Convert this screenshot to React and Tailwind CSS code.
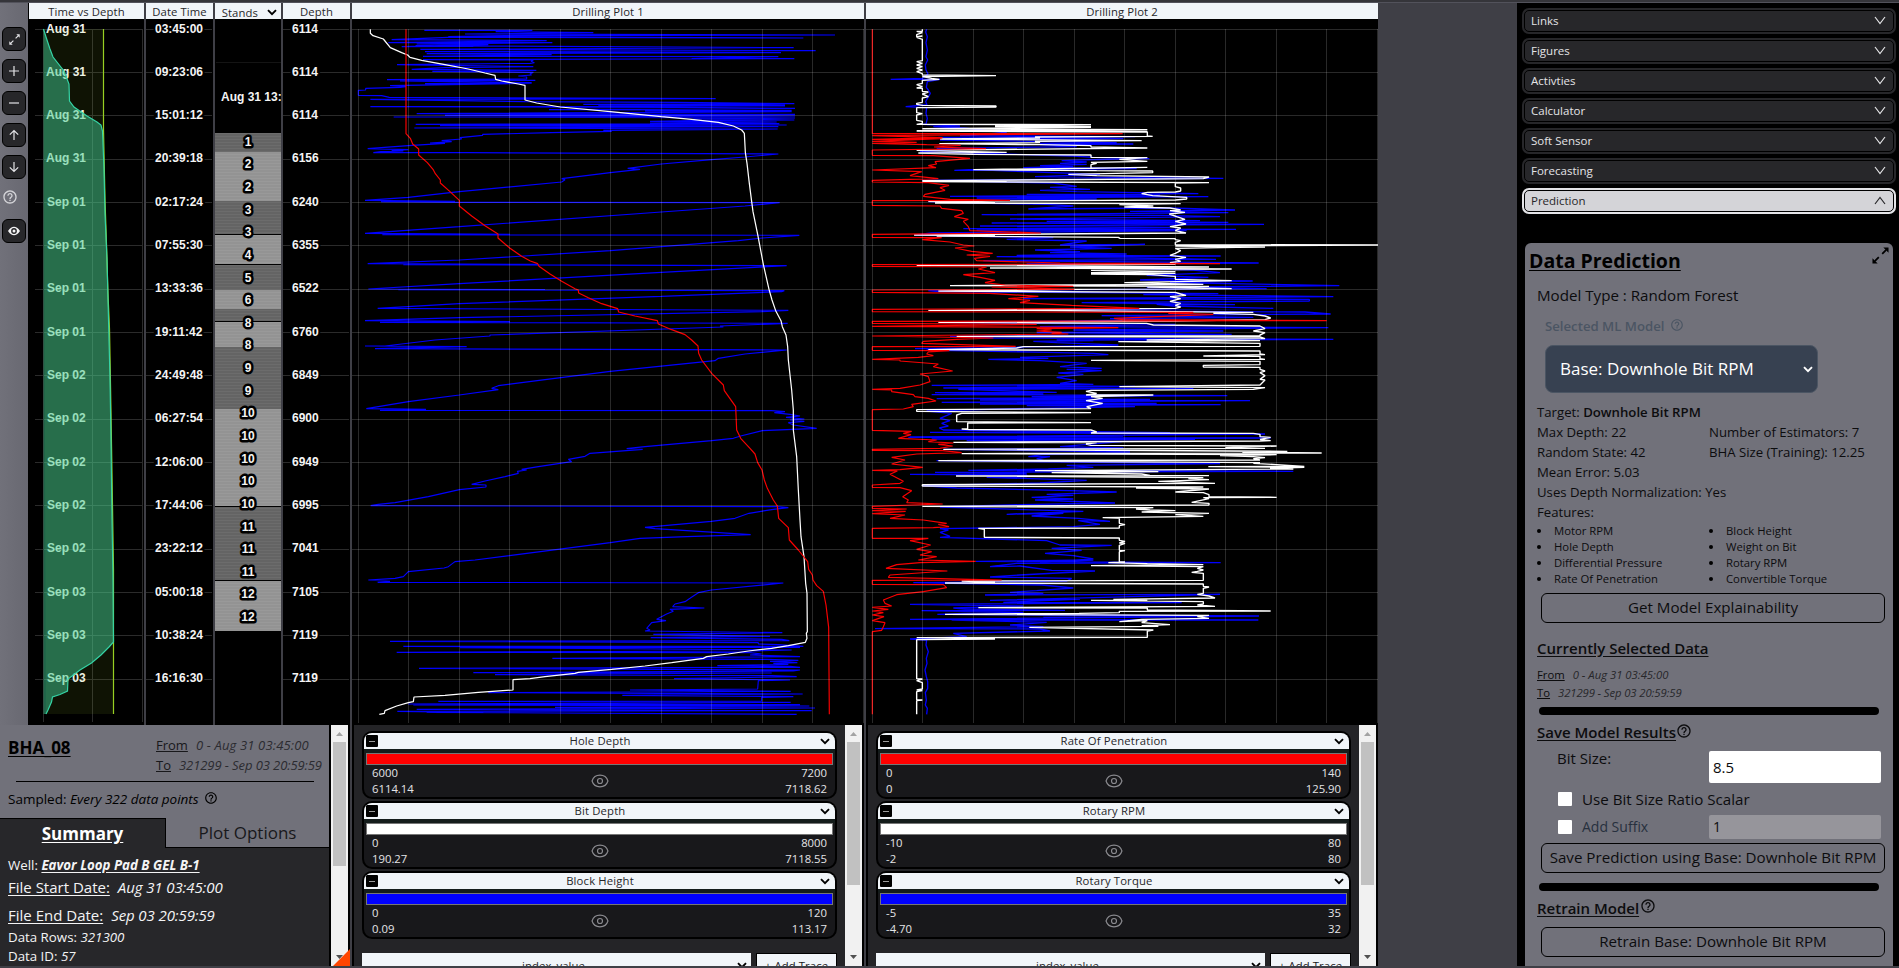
import React from "react";
import { MdHelpOutline } from "react-icons/md";
import { HiOutlineEye } from "react-icons/hi";

const P1_BLUE =
  "238,91 562,91 452,95 745,98 360,102 1470,105 480,107 310,110 1375,114 310,112 140,119 605,122 130,128 622,128 215,132 430,134 170,140 385,139 212,137 1346,143 226,148 1412,152 240,155 1308,158 245,161 620,164 234,169 1300,170 1040,176 1348,176 234,179 565,180 558,184 568,188 555,190 156,194 565,200 300,203 200,208 574,211 262,214 565,217 555,222 560,225 520,228 545,231 545,237 126,239 571,241 165,243 560,248 240,251 560,250 135,257 183,260 165,262 62,265 62,270 40,271 40,286 110,287 133,292 1112,296 76,298 540,305 1000,307 1348,311 715,313 1320,315 760,317 1320,318 76,320 1000,322 1350,325 612,329 1340,331 900,333 1340,335 215,341 1350,343 300,346 1350,348 146,351 1350,354 1045,357 1348,360 1045,362 915,364 1295,366 915,369 1303,371 212,373 1325,375 285,377 1300,380 208,384 1298,387 775,391 800,394 620,398 413,403 413,406 345,413 350,417 290,422 320,425 255,429 300,430 190,437 68,446 190,449 140,451 175,453 108,455 85,458 370,458 1300,462 1200,471 1100,479 949,492 848,505 885,508 796,518 650,536 660,539 650,546 343,575 190,592 60,601 330,604 108,605 343,607 1304,608 1200,618 949,636 343,680 60,700 495,703 112,704 1363,706 1252,714 1180,722 796,752 343,780 68,791 578,793 175,794 1325,797 949,817 343,851 70,867 600,869 160,869 1318,872 1310,875 949,889 343,911 98,925 1330,931 1250,935 343,953 60,962 495,965 105,967 1328,970 1125,978 1135,981 435,1005 435,1008 270,1020 120,1038 60,1038 365,1040 90,1046 1325,1050 1200,1062 1120,1075 1110,1082 796,1114 600,1139 460,1157 440,1165 460,1169 343,1185 190,1205 100,1220 64,1226 243,1228 105,1231 1280,1232 1320,1235 1288,1238 1335,1243 1365,1248 1323,1252 1378,1257 1335,1260 1378,1264 1330,1268 1345,1275 1415,1285 1252,1292 1187,1308 1165,1315 1100,1322 900,1340 845,1346 893,1348 735,1360 720,1369 670,1378 680,1385 580,1400 530,1408 545,1410 517,1414 520,1420 480,1430 420,1443 380,1453 423,1455 423,1461 343,1469 250,1490 150,1508 100,1513 77,1517 1297,1520 1330,1523 1285,1528 1212,1540 1170,1555 1099,1564 900,1582 930,1586 1217,1604 1025,1610 885,1615 796,1628 493,1667 390,1680 330,1685 310,1700 297,1704 190,1715 175,1730 150,1735 70,1740 135,1744 98,1747 1315,1749 1099,1770 1060,1778 1035,1795 1020,1805 990,1812 983,1820 1078,1824 975,1828 985,1834 965,1842 935,1858 963,1862 920,1868 905,1885 915,1890 900,1893 1312,1898 925,1903 1275,1909 917,1913 1310,1918 1333,1922 135,1924 1240,1928 1240,1932 1300,1934 1375,1939 175,1939 1365,1942 345,1943 1340,1950 1215,1953 155,1957 1215,1958 1250,1962 1215,1965 1365,1970 622,1975 1265,1978 1360,1981 1275,1984 1357,1988 1285,1990 1330,1993 1117,1997 1335,1999 1365,2002 222,2005 1365,2010 1345,2013 385,2018 1280,2019 450,2024 1280,2027 1355,2030 987,2036 1335,2040 1240,2042 1238,2067 855,2070 1337,2074 430,2078 1373,2082 832,2086 1345,2090 1250,2092 1250,2103 280,2104 1337,2107 190,2112 1365,2114 205,2115 1393,2118 630,2122 1410,2124 215,2128 1400,2132 157,2134 415,2137 245,2137 1355,2143";
const P1_WHITE =
  "76,88 76,100 84,107 115,117 136,143 170,158 188,165 195,172 230,181 300,194 370,207 420,219 450,226 452,238 470,243 520,252 540,256 540,300 575,309 646,321 796,335 949,350 1040,358 1120,367 1165,378 1190,390 1198,400 1201,457 1206,490 1213,550 1220,605 1224,635 1238,703 1255,793 1272,868 1281,900 1292,932 1308,962 1312,980 1323,1005 1328,1040 1330,1080 1340,1170 1345,1230 1345,1290 1355,1370 1360,1470 1365,1560 1368,1610 1377,1670 1382,1750 1386,1780 1387,1895 1384,1900 1386,1915 1381,1927 1330,1937 1280,1945 1210,1953 1150,1962 1085,1970 1075,1975 980,1988 900,1998 800,2008 700,2017 690,2020 600,2030 555,2036 504,2039 504,2070 400,2077 300,2086 207,2091 205,2105 190,2108 155,2118 120,2132 118,2140 103,2143";
const P1_RED =
  "183,88 183,401 196,415 203,432 221,447 221,465 247,488 264,508 271,521 286,540 286,549 315,575 343,601 343,618 380,648 420,677 459,702 459,714 495,745 530,769 556,783 578,791 582,799 615,822 650,844 690,866 700,870 701,879 730,893 770,911 818,926 821,936 870,948 937,962 940,972 980,989 1020,1004 1040,1020 1059,1038 1061,1060 1070,1080 1100,1120 1135,1155 1138,1172 1172,1220 1175,1290 1187,1315 1215,1345 1230,1362 1238,1388 1251,1410 1258,1440 1267,1465 1285,1500 1297,1518 1301,1555 1330,1583 1333,1620 1360,1650 1388,1685 1391,1708 1402,1725 1404,1740 1415,1757 1435,1774 1443,1815 1451,1882 1453,2143";

const P2_BLUE =
  "200,88 197,96 202,110 198,128 202,150 198,170 203,180 196,195 198,210 204,222 187,235 92,238 240,238 202,245 199,262 205,270 211,280 204,292 197,305 201,314 137,320 200,323 198,340 202,355 198,372 187,373 300,378 220,380 310,384 440,398 300,407 825,410 235,412 790,416 240,420 770,428 540,430 820,432 540,434 650,440 230,445 300,447 180,455 340,459 640,468 700,472 868,476 700,479 605,482 680,486 600,490 680,493 540,497 640,499 490,503 690,504 830,506 283,511 340,509 720,523 525,530 1090,535 187,541 580,549 650,559 570,562 690,568 540,571 650,575 1015,581 500,583 900,585 270,589 1045,590 350,594 710,597 400,600 205,605 350,609 560,613 640,618 505,627 930,624 1125,630 810,634 1105,638 365,644 900,646 1080,650 450,657 1020,662 560,664 1105,667 395,669 1212,673 360,678 930,682 310,686 1128,688 350,690 980,692 215,699 165,705 580,713 440,718 680,723 600,735 855,733 630,741 755,745 525,750 660,755 570,758 800,762 470,766 1082,768 410,770 820,774 1068,778 370,782 1196,789 500,792 660,800 1000,810 1080,818 860,826 1045,832 840,840 1178,843 930,848 1438,857 860,862 1220,866 205,872 235,875 1075,881 850,884 1150,887 1420,890 490,896 1348,898 1348,903 665,908 1125,914 890,913 940,918 1240,925 360,930 1335,936 1412,942 725,947 1180,952 750,956 900,959 240,968 946,973 540,980 1405,983 640,990 1090,993 530,998 1115,1003 270,1009 400,1014 1420,1018 590,1020 700,1022 520,1024 590,1028 775,1035 400,1043 165,1046 490,1043 200,1050 560,1057 700,1060 745,1064 480,1072 565,1075 385,1078 540,1082 680,1090 600,1100 725,1105 620,1108 725,1112 595,1119 670,1123 590,1132 650,1142 600,1150 700,1153 215,1156 825,1159 250,1164 1000,1166 295,1168 590,1177 225,1178 550,1182 215,1184 1102,1187 515,1190 700,1193 230,1196 870,1198 360,1200 1170,1202 245,1207 890,1210 360,1212 1082,1214 500,1217 825,1220 515,1225 200,1233 275,1240 240,1255 270,1262 245,1270 265,1278 238,1284 250,1290 930,1298 210,1297 1215,1302 150,1311 790,1308 145,1312 1232,1314 215,1317 1005,1318 320,1322 785,1325 600,1340 790,1344 250,1348 810,1356 545,1364 505,1370 570,1370 530,1376 560,1384 230,1382 1080,1391 620,1396 700,1402 565,1407 325,1411 1300,1414 225,1417 500,1420 150,1423 500,1425 500,1430 380,1432 680,1441 540,1449 187,1457 290,1464 630,1472 770,1476 560,1483 640,1486 515,1492 640,1497 525,1500 765,1509 485,1514 240,1521 670,1534 440,1543 610,1540 515,1548 655,1555 750,1564 655,1562 720,1573 640,1580 240,1586 265,1590 240,1597 270,1609 240,1612 560,1622 600,1635 755,1636 575,1645 665,1651 555,1660 640,1667 700,1677 540,1687 700,1680 347,1684 1082,1688 470,1690 390,1700 480,1698 575,1711 705,1713 480,1725 390,1731 635,1735 620,1743 160,1748 545,1755 640,1764 530,1772 450,1777 550,1780 375,1785 1080,1783 390,1801 660,1797 430,1807 965,1808 150,1813 490,1818 280,1824 315,1827 615,1831 185,1832 490,1837 310,1840 232,1843 560,1845 1197,1848 550,1852 1115,1849 150,1858 1195,1860 275,1860 560,1867 450,1875 550,1880 45,1886 540,1887 570,1893 280,1900 320,1910 150,1917 200,1920 198,1935 205,1955 199,1975 201,1990 195,2010 199,2030 203,2045 203,2065 196,2078 199,2100 196,2115 202,2125 200,2143";
const P2_WHITE =
  "187,88 187,94 170,94 187,98 170,104 170,110 187,108 170,112 187,118 187,182 170,185 187,190 170,195 187,200 170,205 187,210 170,215 187,221 187,225 408,227 187,230 215,235 238,238 187,241 187,250 170,254 187,260 170,264 187,265 187,274 205,276 187,282 205,290 187,294 187,307 170,310 170,313 187,316 408,318 408,321 187,323 170,323 170,338 187,341 170,345 170,361 187,364 187,370 170,373 693,374 405,378 693,379 405,380 693,382 187,386 862,389 187,391 862,394 170,393 862,396 862,408 878,409 525,411 540,414 240,417 845,422 525,424 540,428 238,431 540,434 693,437 693,441 862,444 170,451 440,457 175,459 340,463 693,465 693,472 862,473 778,478 862,484 693,487 710,490 693,494 693,505 862,502 340,509 710,512 878,513 878,518 625,523 710,527 1047,531 1030,536 187,542 440,542 187,545 1047,548 946,549 946,560 962,564 962,573 946,576 862,577 845,581 878,587 980,592 980,597 946,600 205,604 405,608 225,609 962,611 778,614 880,618 793,621 930,624 962,630 930,632 975,637 928,642 950,650 975,658 946,664 978,672 930,680 962,684 946,692 978,699 162,705 405,707 230,708 775,712 780,715 946,716 946,719 962,722 946,727 946,734 1554,735 946,738 1215,741 1130,742 946,745 962,752 946,760 930,766 978,772 946,778 962,784 930,788 946,793 170,796 1047,801 390,804 1115,807 693,811 946,815 693,818 946,820 693,822 870,824 946,829 946,838 1115,842 793,848 1030,853 270,857 1047,859 862,861 1115,866 643,868 235,873 946,877 962,882 978,886 930,890 962,896 930,904 962,910 946,916 962,921 946,925 205,931 405,930 1180,937 1060,940 1180,943 1215,948 1232,954 1215,959 930,963 235,967 860,970 880,975 1200,978 1215,986 1180,993 1215,998 1200,1005 1200,1007 290,1009 1200,1011 1215,1016 860,1020 1200,1022 775,1025 1200,1030 1200,1039 490,1040 470,1044 205,1049 1200,1053 1200,1062 1215,1064 1030,1068 1200,1069 1200,1076 1215,1078 693,1081 1200,1084 1200,1094 1030,1096 1030,1101 1200,1102 1200,1108 1215,1113 1200,1118 1215,1127 1200,1138 1215,1140 1200,1155 778,1160 1215,1163 1180,1168 693,1171 678,1174 710,1180 678,1185 880,1185 693,1190 728,1195 678,1202 728,1210 680,1220 693,1226 170,1229 170,1234 693,1238 305,1240 290,1245 290,1265 693,1268 323,1269 323,1287 305,1287 330,1289 693,1290 710,1296 693,1299 1180,1300 1200,1303 1200,1310 1232,1312 1200,1318 1232,1322 1200,1323 280,1327 710,1328 678,1332 693,1336 1250,1338 1096,1343 1215,1345 250,1348 1282,1354 1147,1356 1385,1359 305,1361 1250,1364 1080,1367 1180,1370 1215,1373 1180,1376 1200,1380 235,1382 1200,1388 1180,1390 1250,1394 1333,1399 1045,1400 1333,1402 1230,1405 1300,1407 525,1412 895,1415 575,1418 845,1422 870,1426 1047,1427 288,1428 1030,1433 985,1436 1047,1439 895,1444 1065,1450 187,1454 187,1458 1030,1461 828,1464 1047,1467 946,1476 1030,1478 1047,1484 1047,1490 1250,1492 1030,1493 1047,1496 995,1507 1047,1510 1047,1515 187,1519 880,1523 828,1527 870,1530 946,1532 845,1536 1047,1540 946,1544 1030,1549 728,1553 778,1555 778,1570 795,1574 778,1577 778,1584 355,1585 373,1588 373,1612 778,1614 778,1621 795,1624 778,1629 795,1630 778,1636 778,1651 795,1652 778,1655 778,1685 795,1686 745,1688 862,1691 1030,1694 693,1697 1030,1700 1012,1705 1030,1710 1012,1714 995,1717 1030,1720 1030,1741 305,1743 405,1747 255,1749 1030,1752 1030,1759 1047,1761 1030,1765 1030,1780 1012,1783 1047,1788 1065,1794 760,1798 862,1800 693,1801 1030,1805 1030,1812 1012,1815 1065,1819 355,1823 862,1824 862,1830 1232,1833 778,1834 778,1838 657,1840 255,1843 1047,1846 1012,1850 1047,1855 845,1858 778,1865 862,1862 845,1868 930,1874 845,1877 895,1879 508,1882 880,1890 862,1893 862,1912 170,1913 405,1917 170,1919 170,2036 187,2037 170,2042 187,2048 187,2067 170,2070 187,2072 170,2075 170,2099 187,2100 170,2102 170,2143";
const P2_RED =
  "37,88 37,401 788,401 37,407 248,413 37,418 245,416 37,424 170,427 37,430 200,434 302,436 222,441 378,446 37,450 37,466 220,467 330,475 225,485 230,492 205,497 228,503 37,510 185,515 150,527 235,536 37,541 37,546 205,548 267,556 240,563 255,571 195,583 190,589 270,598 450,601 37,602 37,616 240,618 245,625 305,632 310,640 283,650 325,658 310,664 325,680 330,692 543,699 37,703 37,712 245,713 187,719 270,726 310,735 343,738 285,744 335,754 398,760 320,765 390,769 343,775 350,782 600,789 1080,791 37,794 37,799 380,801 355,807 405,818 310,824 360,832 405,841 375,848 435,855 640,859 395,861 643,868 37,870 37,877 390,880 535,889 445,896 510,901 480,908 635,916 838,925 37,928 37,935 1000,937 925,940 1060,943 762,955 790,959 1400,962 37,964 37,970 530,973 37,979 775,983 530,986 575,990 530,993 605,997 575,1000 625,1002 37,1008 400,1014 290,1018 190,1024 185,1030 467,1039 37,1040 37,1051 268,1052 205,1056 200,1062 220,1067 175,1072 37,1078 120,1080 120,1083 235,1092 220,1100 278,1113 180,1122 205,1130 210,1145 180,1155 120,1165 37,1168 95,1170 95,1175 160,1184 165,1190 205,1195 228,1203 155,1213 160,1220 130,1227 37,1229 37,1291 155,1294 130,1300 153,1304 115,1315 230,1320 205,1325 280,1329 235,1333 278,1338 240,1345 37,1348 37,1351 248,1352 305,1358 170,1362 95,1372 135,1380 95,1392 188,1402 120,1409 37,1411 112,1413 90,1423 130,1444 120,1450 37,1455 37,1462 120,1463 155,1472 128,1490 145,1500 140,1508 248,1512 37,1519 37,1525 140,1527 37,1532 137,1534 37,1541 135,1545 90,1555 190,1560 260,1570 235,1573 267,1580 220,1583 37,1585 37,1615 205,1615 150,1622 212,1635 170,1648 215,1655 180,1665 230,1670 175,1680 347,1684 180,1688 110,1694 78,1705 262,1713 90,1725 85,1732 425,1740 37,1741 37,1753 250,1754 260,1763 190,1775 110,1784 70,1800 75,1810 95,1818 37,1822 85,1828 37,1833 70,1838 37,1845 72,1850 37,1862 75,1868 70,1880 65,1891 37,1895 37,2143";

const ROW_Y = [10, 53, 96, 140, 183, 226, 270, 313, 356, 400, 443, 486, 530, 573, 616, 660];
const TEXT_Y = [14, 57, 100, 143, 187, 230, 273, 317, 360, 403, 447, 490, 533, 577, 620, 663];
const DAYS = ["Aug 31", "Aug 31", "Aug 31", "Aug 31", "Sep 01", "Sep 01", "Sep 01", "Sep 01", "Sep 02", "Sep 02", "Sep 02", "Sep 02", "Sep 02", "Sep 03", "Sep 03", "Sep 03"];
const TIMES = ["03:45:00", "09:23:06", "15:01:12", "20:39:18", "02:17:24", "07:55:30", "13:33:36", "19:11:42", "24:49:48", "06:27:54", "12:06:00", "17:44:06", "23:22:12", "05:00:18", "10:38:24", "16:16:30"];
const DEPTHS = [6114, 6114, 6114, 6156, 6240, 6355, 6522, 6760, 6849, 6900, 6949, 6995, 7041, 7105, 7119, 7119];

const STANDS = [
  [133, 152, 0], [152, 201, 1], [201, 234, 0], [235, 264, 1], [265, 290, 0], [290, 309, 1], [309, 321, 0],
  [322, 347, 1], [347, 409, 0], [409, 506, 1], [507, 580, 0], [581, 631, 1],
];
const STAND_LABELS = [1, 2, 2, 3, 3, 4, 5, 6, 8, 8, 9, 9, 10, 10, 10, 10, 10, 11, 11, 11, 12, 12];

const chartText = "fill-[#f4f4f4] font-['Liberation_Sans'] text-[12px] font-bold";

function ChartHeader({ children }) {
  return (
    <div className="h-4 overflow-hidden bg-[#f1f5f9] text-center text-[11.3px] leading-[17px] tracking-[0.1px] whitespace-nowrap text-[#27272a]">
      {children}
    </div>
  );
}

function Chevron({ className }) {
  return (
    <svg viewBox="0 0 10 7" className={className}>
      <path d="M1 1.2 5 5.2 9 1.2" fill="none" stroke="currentColor" strokeWidth="1.9" />
    </svg>
  );
}

function Diagonal({ className }) {
  return (
    <svg viewBox="0 0 18 18" className={className} fill="currentColor" stroke="currentColor">
      <path d="M10.800 7.200 15 3M7.200 10.800 3 15" fill="none" strokeWidth="1.9" />
      <path d="M17.500.5v5.500L12 .5zM.5 17.500v-5.500l5.500 5.500z" stroke="none" />
    </svg>
  );
}

function Plot({ left, xs, blue, white, red, weight }) {
  return (
    <svg viewBox={`${left} 57 1536 2118`} className="block h-[706px] w-[512px] bg-black">
      <g fill="none" strokeLinejoin="bevel">
        <polyline points={blue} stroke="#0000ff" strokeWidth={weight} />
        <polyline points={white} stroke="#ffffff" strokeWidth={weight + 0.3} />
        <polyline points={red} stroke="#fa0000" strokeWidth="3.5" />
      </g>
      <g fill="#ffffff" fillOpacity="0.16" shapeRendering="crispEdges">
        {xs.map((x) => (
          <rect key={x} x={x} y="87" width="3" height="2082" />
        ))}
        {ROW_Y.map((y) => (
          <rect key={y} x={left} y={y * 3 + 57} width="1536" height="3" />
        ))}
      </g>
    </svg>
  );
}

function TimeDepth() {
  const area =
    "14.5,10 17,18 21,30 24,38 35,52 40,65 40.5,82 45,88 58,97 68,103 72,106 73.5,112 75,150 76,195 78,240 79,280 80,320 81,360 82,420 83,500 84,560 84.5,623 80,628 72,636 62.5,644 51,651 39,660 38.5,672 31,675.5 23.5,678 22.5,683 19,691 17,695";
  return (
    <svg viewBox="0 0 115 706" className="block h-[706px] w-[115px] bg-black">
      {ROW_Y.map((y) => (
        <rect key={y} x="6" y={y} width="108" height="1" fill="#2b2b2b" />
      ))}
      {[14, 63, 113].map((x) => (
        <rect key={x} x={x} y="10" width="1" height="693" fill="#2b2b2b" />
      ))}
      {DAYS.map((d, i) => (
        <text key={i} x={i < 4 ? 17 : 18} y={TEXT_Y[i]} className={chartText}>
          {d}
        </text>
      ))}
      <polygon points="14.5,10 74.5,10 74.5,108 76,150 79,260 81,300 82,360 84,480 84.5,695 17,695" fill="#a3d52c" fillOpacity="0.09" />
      <polygon points={`14.5,10 ${area} 14.5,695`} fill="#41ce95" fillOpacity="0.49" />
      <polyline points="74.5,10 74.5,110 76,181 77.5,225 79,275 80.5,310 81.5,365 83,455 84.5,550 84.5,695" fill="none" stroke="#97cf22" strokeWidth="1.2" />
      <polyline points={area} fill="none" stroke="#35d3a5" strokeWidth="1.2" />
    </svg>
  );
}

function LabelColumn({ values, x }) {
  return (
    <svg viewBox="0 0 67 706" className="block h-[706px] w-[67px] bg-black">
      {ROW_Y.map((y, i) => (
        <g key={i}>
          <rect x="0" y={y} width="66" height="1" fill="#2b2b2b" />
          <text x={x} y={TEXT_Y[i]} className={chartText} stroke="#000" strokeWidth="4" paintOrder="stroke">
            {values[i]}
          </text>
        </g>
      ))}
    </svg>
  );
}

function StandsColumn() {
  return (
    <svg viewBox="0 0 66 706" className="block h-[706px] w-[66px] bg-black">
      <defs>
        <pattern id="lines" width="66" height="3" patternUnits="userSpaceOnUse">
          <rect width="66" height="1" fill="#ffffff" fillOpacity="0.05" />
        </pattern>
      </defs>
      <rect x="1" y="43" width="65" height="1" fill="#141414" />
      {STANDS.map(([a, b, light]) => (
        <g key={a}>
          <rect x="0" y={a - 19} width="66" height={b - a} fill={light ? "#939393" : "#646464"} />
          <rect x="0" y={a - 19} width="66" height={b - a} fill="url(#lines)" />
        </g>
      ))}
      <text x="6" y="82" className={chartText}>
        Aug 31 13:
      </text>
      {STAND_LABELS.map((n, i) => (
        <text key={i} x="33" y={Math.round(126.8 + i * 22.63)} textAnchor="middle" className={chartText} stroke="#000" strokeWidth="5" strokeLinejoin="round" paintOrder="stroke">
          {n}
        </text>
      ))}
    </svg>
  );
}

function ToolButton({ children }) {
  return (
    <div className="flex h-6 w-6 items-center justify-center rounded-md border border-black bg-[#27272a] text-[#e4e4e7]">{children}</div>
  );
}

function LineIcon({ d }) {
  return (
    <svg viewBox="0 0 12 12" className="h-3 w-3">
      <path d={d} fill="none" stroke="currentColor" strokeWidth="1.2" />
    </svg>
  );
}

function Toolbar() {
  return (
    <div className="flex h-[722px] w-[28px] flex-col gap-2 bg-gradient-to-r from-[#71717a] to-[#686871] pt-6 pl-[2px]">
      <ToolButton>
        <Diagonal className="h-[11px] w-[11px]" />
      </ToolButton>
      <ToolButton>
        <LineIcon d="M6 1v10M1 6h10" />
      </ToolButton>
      <ToolButton>
        <LineIcon d="M1 6h10" />
      </ToolButton>
      <ToolButton>
        <LineIcon d="M6 11V1.5M1.8 5.7 6 1.5l4.2 4.2" />
      </ToolButton>
      <ToolButton>
        <LineIcon d="M6 1v9.5M1.8 6.3 6 10.5l4.2-4.2" />
      </ToolButton>
      <div className="h-6 pt-[2px] text-[#d4d4d8]">
        <MdHelpOutline size={16} />
      </div>
      <ToolButton>
        <svg viewBox="0 0 12 10" className="h-[10px] w-3">
          <path d="M0 5C2 1.8 4 .8 6 .8S10 1.8 12 5C10 8.2 8 9.2 6 9.2S2 8.2 0 5z" fill="#f4f4f5" />
          <circle cx="6" cy="5" r="2.900" fill="#27272a" />
          <circle cx="6" cy="5" r="1.500" fill="#f4f4f5" />
        </svg>
      </ToolButton>
    </div>
  );
}

function Scrollbar({ thumb }) {
  return (
    <div className="flex h-full w-[17px] shrink-0 flex-col items-center bg-[#f1f1f1]">
      <svg viewBox="0 0 17 17" className="h-[17px] w-[17px]">
        <path d="M5 11h7L8.500 7z" fill="#a3a3a3" />
      </svg>
      <div className={`w-[13px] bg-[#c1c1c1] ${thumb}`} />
      <svg viewBox="0 0 17 17" className="mt-auto h-[17px] w-[17px]">
        <path d="M5 6h7L8.500 10z" fill="#505050" />
      </svg>
    </div>
  );
}

function TraceCard({ name, bar, min, max, lo, hi }) {
  return (
    <div className="flex h-[68px] w-[475px] shrink-0 flex-col overflow-hidden rounded-[10px] border-2 border-black bg-[#18181b]">
      <div className="flex h-4 shrink-0 items-center bg-[#f1f5f9] pr-[5px] pl-[2px]">
        <div className="flex h-3 w-3 items-center justify-center rounded-[1px] bg-black">
          <div className="h-px w-[6px] bg-[#9a9a9a]" />
        </div>
        <div className="flex-1 pl-[2px] text-center text-[11.3px] leading-[18px] tracking-[0.15px] text-[#27272a]">{name}</div>
        <Chevron className="h-[7px] w-[10px] text-black" />
      </div>
      <div className="h-1 shrink-0 bg-[#141c1b]" />
      <div className={`mx-[2px] h-3 shrink-0 border border-[#767676] ${bar}`} />
      <div className="flex h-8 items-center justify-between px-2 text-[11.3px] leading-4 text-[#e4e4e7]">
        <div className="w-24">
          <div>{min}</div>
          <div>{lo}</div>
        </div>
        <HiOutlineEye size={20} className="text-[#8a8a8f] [&_path]:stroke-[1.4]" />
        <div className="w-24 text-right">
          <div>{max}</div>
          <div>{hi}</div>
        </div>
      </div>
    </div>
  );
}

function TracePanel({ traces }) {
  return (
    <div className="flex h-[241px] w-[512px] border-x-2 border-black bg-[#242427]">
      <div className="flex flex-1 flex-col gap-[2px] overflow-hidden pt-[6px] pl-2">
        {traces.map((t) => (
          <TraceCard key={t.name} {...t} />
        ))}
        <div className="mt-[12px] flex h-6 w-[475px] shrink-0 gap-[5px] text-[11.3px] leading-[17px]">
          <div className="flex h-6 w-[389px] items-start bg-[#f1f5f9] pt-[4px] pr-1 text-[#27272a]">
            <span className="flex-1 pl-2 text-center tracking-[0.1px]">index_value</span>
            <Chevron className="mt-[5px] h-[7px] w-[10px] text-black" />
          </div>
          <div className="h-6 w-[81px] border border-black bg-[#f1f5f9] pt-[3px] text-center tracking-[0.1px] text-[#18181b]">+ Add Trace</div>
        </div>
      </div>
      <Scrollbar thumb="h-[143px]" />
    </div>
  );
}

const PLOT1 = [
  { name: "Hole Depth", bar: "bg-[#ff0000]", min: "6000", max: "7200", lo: "6114.14", hi: "7118.62" },
  { name: "Bit Depth", bar: "bg-white", min: "0", max: "8000", lo: "190.27", hi: "7118.55" },
  { name: "Block Height", bar: "bg-[#0000ff]", min: "0", max: "120", lo: "0.09", hi: "113.17" },
];
const PLOT2 = [
  { name: "Rate Of Penetration", bar: "bg-[#ff0000]", min: "0", max: "140", lo: "0", hi: "125.90" },
  { name: "Rotary RPM", bar: "bg-white", min: "-10", max: "80", lo: "-2", hi: "80" },
  { name: "Rotary Torque", bar: "bg-[#0000ff]", min: "-5", max: "35", lo: "-4.70", hi: "32" },
];

function SummaryPanel() {
  return (
    <div className="relative flex h-[241px] w-[350px] border-r-2 border-black">
      <div className="flex h-full w-[331px] flex-col border-r-2 border-black bg-[#71717a] whitespace-nowrap text-black">
        <div className="flex h-[56px] pt-[10px] pl-2">
          <div className="w-[148px] pt-px text-[17px] leading-6 font-bold underline underline-offset-2">BHA_08</div>
          <div className="text-[13px] leading-5 text-[#18181b]">
            <div>
              <span className="underline">From</span>
              <span className="ml-2 tracking-[0.15px] text-[#2b2b30] italic">0 - Aug 31 03:45:00</span>
            </div>
            <div>
              <span className="underline">To</span>
              <span className="ml-2 tracking-[-0.08px] text-[#2b2b30] italic">321299 - Sep 03 20:59:59</span>
            </div>
          </div>
        </div>
        <div className="ml-4 h-px w-[298px] bg-black" />
        <div className="flex h-[36px] pt-[7px] pl-2 text-[13.500px] leading-5">
          <span>
            Sampled: <i>Every 322 data points</i>
          </span>
          <MdHelpOutline size={14} className="mt-[2px] ml-[5px]" />
        </div>
        <div className="flex h-[30px] text-center leading-[30px]">
          <div className="w-[166px] border-t border-r border-black bg-[#27272a] text-[17px] font-bold text-white underline underline-offset-2">Summary</div>
          <div className="flex-1 border-b border-black text-[17px] text-[#18181b]">Plot Options</div>
        </div>
        <div className="flex flex-1 flex-col bg-[#27272a] pt-[7px] pl-2 text-[13.300px] leading-5 text-[#f4f4f5]">
          <div>
            Well: <b className="font-bold italic underline underline-offset-2">Eavor Loop Pad B GEL B-1</b>
          </div>
          <div className="text-[15px] leading-6">
            <span className="underline underline-offset-2">File Start Date:</span>
            <i className="ml-2 tracking-[-0.1px]">Aug 31 03:45:00</i>
          </div>
          <div className="pt-1 text-[15px] leading-6">
            <span className="underline underline-offset-2">File End Date:</span>
            <i className="ml-2 tracking-[-0.1px]">Sep 03 20:59:59</i>
          </div>
          <div>
            Data Rows: <i>321300</i>
          </div>
          <div className="leading-[18px]">
            Data ID: <i>57</i>
          </div>
        </div>
      </div>
      <Scrollbar thumb="h-[124px]" />
      <svg viewBox="0 0 17 17" className="absolute right-[-2px] bottom-0 h-[17px] w-[17px]">
        <path d="M17 0v17H0z" fill="#ff4500" />
      </svg>
    </div>
  );
}

function Accordion({ label, open }) {
  return (
    <div className={`h-[26px] rounded-[7px] border-2 ${open ? "border-[#e4e4e7] bg-[#d4d4d8] text-[#27272a]" : "border-[#27272a] bg-[#27272a] text-[#e4e4e7]"}`}>
      <div className="flex h-[22px] items-center justify-between rounded-[5px] border border-black pr-[7px] pl-[6px] text-[11.500px] leading-[22px]">
        <span>{label}</span>
        <svg viewBox="0 0 12 9" className="mb-[1px] h-[9px] w-3">
          <path d={open ? "M1 8 6 1.500 11 8" : "M1 1l5 6.500L11 1"} fill="none" stroke="currentColor" strokeWidth="1.200" />
        </svg>
      </div>
    </div>
  );
}

function Features({ items }) {
  return (
    <ul className="w-[172px]">
      {items.map((f) => (
        <li key={f} className="flex h-4 items-center text-[11.300px] leading-4">
          <span className="mr-[13px] h-1 w-1 rounded-full bg-black" />
          {f}
        </li>
      ))}
    </ul>
  );
}

function PanelButton({ children, className }) {
  return (
    <div className={`ml-1 h-[30px] w-[344px] rounded-md border border-black text-center text-[15.150px] leading-[26px] whitespace-nowrap ${className}`}>{children}</div>
  );
}

function Prediction() {
  return (
    <div className="mt-[29px] mr-[6px] ml-2 h-[723px] overflow-hidden rounded-t-md bg-[#71717a] text-[#0c0c0e]">
      <div className="flex h-[40px] justify-between pt-[4px] pr-1 pl-1">
        <h2 className="text-[19.500px] leading-7 font-bold text-black underline underline-offset-2">Data Prediction</h2>
        <Diagonal className="h-[17px] w-[17px] text-black" />
      </div>
      <div className="pl-3">
        <div className="h-[33px] text-[15.150px] leading-6">Model Type : Random Forest</div>
        <div className="flex h-[29px] pl-2 text-[13.200px] leading-5 font-semibold text-[#4b5563]">
          Selected ML Model
          <MdHelpOutline size={14} className="mt-[2px] ml-[5px]" />
        </div>
        <div className="ml-2 flex h-12 w-[273px] items-center justify-between rounded-lg border border-[#4b5563] bg-[#374151] pr-1 pl-[14px] text-[17px] text-white">
          Base: Downhole Bit RPM
          <Chevron className="h-[7px] w-[10px]" />
        </div>
        <div className="mt-[9px] text-[13.200px] leading-5">
          <div>
            Target: <b className="font-semibold">Downhole Bit RPM</b>
          </div>
          <div className="grid grid-cols-[172px_1fr] whitespace-nowrap">
            <span>Max Depth: 22</span>
            <span>Number of Estimators: 7</span>
            <span>Random State: 42</span>
            <span>BHA Size (Training): 12.25</span>
          </div>
          <div>Mean Error: 5.03</div>
          <div>Uses Depth Normalization: Yes</div>
          <div>Features:</div>
        </div>
        <div className="mt-px flex">
          <Features items={["Motor RPM", "Hole Depth", "Differential Pressure", "Rate Of Penetration"]} />
          <Features items={["Block Height", "Weight on Bit", "Rotary RPM", "Convertible Torque"]} />
        </div>
        <PanelButton className="mt-[6px]">Get Model Explainability</PanelButton>
        <div className="mt-[13px] text-[15px] leading-6 font-semibold underline underline-offset-2">Currently Selected Data</div>
        <div className="mt-[6px] text-[11.300px] leading-[18px]">
          <div>
            <span className="underline">From</span>
            <i className="ml-2 text-[#27272a]">0 - Aug 31 03:45:00</i>
          </div>
          <div>
            <span className="underline">To</span>
            <i className="ml-2 tracking-[-0.1px] text-[#27272a]">321299 - Sep 03 20:59:59</i>
          </div>
        </div>
        <div className="mt-[5px] ml-[2px] h-2 w-[340px] rounded bg-black" />
        <div className="mt-[5px] flex text-[15px] leading-6 font-semibold">
          <span className="underline underline-offset-2">Save Model Results</span>
          <MdHelpOutline size={16} className="mt-[3px]" />
        </div>
        <div className="mt-[7px] flex h-8">
          <span className="-mt-[5px] w-[172px] pl-5 text-[15px] leading-6">Bit Size:</span>
          <div className="w-[172px] rounded-[2px] bg-white pl-1 text-[15px] leading-[32px]">8.5</div>
        </div>
        <div className="mt-1 flex h-6 items-center pl-[21px] text-[15.150px] leading-6">
          <span className="mr-[10px] h-[14px] w-[14px] rounded-[1px] bg-white" />
          Use Bit Size Ratio Scalar
        </div>
        <div className="mt-1 flex h-6">
          <div className="flex w-[172px] items-center pl-[21px] text-[14px] leading-6 text-[#27303e]">
            <span className="mr-[10px] h-[14px] w-[14px] rounded-[1px] bg-white" />
            Add Suffix
          </div>
          <div className="w-[172px] rounded-[2px] bg-[#96959b] pl-1 text-[14px] leading-[24px]">1</div>
        </div>
        <PanelButton className="mt-1">Save Prediction using Base: Downhole Bit RPM</PanelButton>
        <div className="mt-[10px] ml-[2px] h-2 w-[340px] rounded bg-black" />
        <div className="mt-[5px] flex text-[15px] leading-6 font-semibold">
          <span className="underline underline-offset-2">Retrain Model</span>
          <MdHelpOutline size={16} className="mt-[2px] ml-px" />
        </div>
        <PanelButton className="mt-[7px]">Retrain Base: Downhole Bit RPM</PanelButton>
      </div>
    </div>
  );
}

export default function App() {
  return (
    <div className="flex h-[968px] w-[1899px] flex-col overflow-hidden bg-[#3f3f46] font-['Open_Sans',sans-serif]">
      <div className="h-[3px] shrink-0 border-b border-[#52525b] bg-[#35353a]" />
      <div className="flex h-[963px]">
        <div className="flex w-[350px] flex-col">
          <div className="flex h-[722px]">
            <Toolbar />
            <div className="flex gap-[2px] border-l border-black">
              <div>
                <ChartHeader>Time vs Depth</ChartHeader>
                <TimeDepth />
              </div>
              <div>
                <ChartHeader>Date Time</ChartHeader>
                <LabelColumn values={TIMES} x={9} />
              </div>
              <div>
                <ChartHeader>
                  <span className="flex items-center justify-end pr-1">
                    <span className="mr-[9px] pt-px">Stands</span>
                    <Chevron className="h-[7px] w-[10px] text-black" />
                  </span>
                </ChartHeader>
                <StandsColumn />
              </div>
              <div>
                <ChartHeader>Depth</ChartHeader>
                <LabelColumn values={DEPTHS} x={9} />
              </div>
            </div>
          </div>
          <SummaryPanel />
        </div>
        <div className="ml-[2px] w-[512px]">
          <ChartHeader>Drilling Plot 1</ChartHeader>
          <Plot left={21} xs={[39, 189, 342, 492, 645, 795, 948, 1098, 1251, 1401, 1554]} blue={P1_BLUE} white={P1_WHITE} red={P1_RED} weight={3.4} />
          <TracePanel traces={PLOT1} />
        </div>
        <div className="ml-[2px] w-[512px]">
          <ChartHeader>Drilling Plot 2</ChartHeader>
          <Plot left={18} xs={[36, 186, 339, 489, 642, 792, 945, 1095, 1248, 1398, 1551]} blue={P2_BLUE} white={P2_WHITE} red={P2_RED} weight={3.9} />
          <TracePanel traces={PLOT2} />
        </div>
        <div className="ml-[139px] w-[382px] bg-black">
          <div className="flex flex-col gap-1 pt-[5px] pr-[3px] pl-[5px]">
            {["Links", "Figures", "Activties", "Calculator", "Soft Sensor", "Forecasting"].map((l) => (
              <Accordion key={l} label={l} />
            ))}
            <Accordion label="Prediction" open />
          </div>
          <Prediction />
        </div>
      </div>
    </div>
  );
}
